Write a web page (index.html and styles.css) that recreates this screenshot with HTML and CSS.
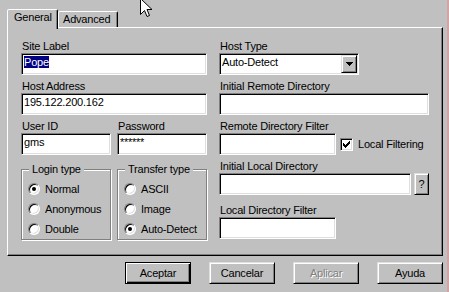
FILE: index.html
```html
<!DOCTYPE html>
<html>
<head>
<meta charset="utf-8">
<link rel="stylesheet" href="styles.css">
</head>
<body>
<div class="dlg">
  <svg class="cursor" width="13" height="20" viewBox="0 0 13 20">
    <path d="M0.5 0.5 L0.5 16.5 L4.5 12.5 L7 18.5 L9.5 17.5 L7 11.5 L12 11.5 Z" fill="#fff" stroke="#000" stroke-width="1" stroke-linejoin="miter"/>
  </svg>
  <div class="tabs">
    <div class="tab tab-sel">General</div>
    <div class="tab tab-adv">Advanced</div>
  </div>
  <div class="panel">
    <div class="col">
      <div class="row">
        <div class="label">Site Label</div>
        <div class="field"><span class="hl">Pope</span></div>
      </div>
      <div class="row">
        <div class="label">Host Address</div>
        <div class="field">195.122.200.162</div>
      </div>
      <div class="row pair">
        <div class="sub">
          <div class="label">User ID</div>
          <div class="field">gms</div>
        </div>
        <div class="sub">
          <div class="label">Password</div>
          <div class="field pw">******</div>
        </div>
      </div>
      <div class="pair groups">
        <div class="group">
          <div class="legend">Login type</div>
          <div class="opt"><span class="radio on"></span>Normal</div>
          <div class="opt"><span class="radio"></span>Anonymous</div>
          <div class="opt"><span class="radio"></span>Double</div>
        </div>
        <div class="group">
          <div class="legend">Transfer type</div>
          <div class="opt"><span class="radio"></span>ASCII</div>
          <div class="opt"><span class="radio"></span>Image</div>
          <div class="opt"><span class="radio on"></span>Auto-Detect</div>
        </div>
      </div>
    </div>
    <div class="col">
      <div class="row">
        <div class="label">Host Type</div>
        <div class="field select w-select">
          <span>Auto-Detect</span>
          <span class="drop raised">
            <svg width="7" height="4" viewBox="0 0 7 4" shape-rendering="crispEdges"><path d="M0 0h7v1H0z M1 1h5v1H1z M2 2h3v1H2z M3 3h1v1H3z" fill="#000"/></svg>
          </span>
        </div>
      </div>
      <div class="row">
        <div class="label">Initial Remote Directory</div>
        <div class="field w-full"></div>
      </div>
      <div class="row">
        <div class="label">Remote Directory Filter</div>
        <div class="inline">
          <div class="field w-short"></div>
          <span class="check">
            <svg width="7" height="7" viewBox="0 0 7 7" shape-rendering="crispEdges"><path d="M6 0h1v3H6z M5 1h1v3H5z M4 2h1v3H4z M0 2h1v3H0z M1 3h1v3H1z M3 3h1v3H3z M2 4h1v3H2z" fill="#000"/></svg>
          </span>
          <span class="check-label">Local Filtering</span>
        </div>
      </div>
      <div class="row">
        <div class="label">Initial Local Directory</div>
        <div class="inline">
          <div class="field w-local"></div>
          <span class="qbtn raised">?</span>
        </div>
      </div>
      <div class="row row-last">
        <div class="label">Local Directory Filter</div>
        <div class="field w-short"></div>
      </div>
    </div>
  </div>
  <div class="buttons">
    <div class="btn btn-default">Aceptar</div>
    <div class="btn raised">Cancelar</div>
    <div class="btn raised disabled">Aplicar</div>
    <div class="btn raised">Ayuda</div>
  </div>
</div>
</body>
</html>
```

FILE: styles.css
```css
* { box-sizing: border-box; }

body {
  margin: 0;
  background: #c0c0c0;
  font-family: "Liberation Sans", Arial, sans-serif;
  font-size: 11px;
  letter-spacing: -0.2px;
  color: #000;
}

.dlg {
  position: relative;
  width: 449px;
  height: 292px;
  border-right: 2px solid #d4a3a3;
  overflow: hidden;
}

.cursor {
  position: absolute;
  left: 140px;
  top: -2px;
  z-index: 5;
}

.tabs {
  display: flex;
  align-items: flex-end;
  height: 27px;
  padding-left: 7px;
}

.tab {
  height: 16px;
  border: 1px solid;
  border-bottom: none;
  border-color: #fff #000 transparent #fff;
  border-radius: 2px 2px 0 0;
  box-shadow: inset -1px 0 #808080;
  line-height: 14px;
  background: #c0c0c0;
}

.tab-sel {
  width: 51px;
  height: 20px;
  padding-left: 6px;
  margin-bottom: -2px;
  position: relative;
  z-index: 1;
}

.tab-adv {
  width: 60px;
  padding-left: 4px;
}

.panel {
  width: 436px;
  height: 229px;
  margin-left: 7px;
  border: 1px solid;
  border-color: #fff #000 #000 #fff;
  box-shadow: inset -1px -1px #808080;
  padding: 12px 0 0 13px;
  display: grid;
  grid-template-columns: 186px 210px;
  column-gap: 12px;
  align-items: start;
}

.col {
  display: flex;
  flex-direction: column;
}

.col > * + * { margin-top: 5px; }
.col > .groups { margin-top: 14px; }
.col > .row-last { margin-top: 9px; }

.label {
  height: 13px;
  line-height: 13px;
  padding-left: 1px;
  white-space: nowrap;
}

.field {
  height: 22px;
  background: #fff;
  border: 1px solid;
  border-color: #808080 #fff #fff #808080;
  box-shadow: inset 1px 1px #000, inset -1px -1px #dfdfdf;
  padding: 1px 1px 1px 2px;
  line-height: 15px;
  white-space: nowrap;
  overflow: hidden;
}

.hl {
  background: #000080;
  color: #fff;
}

.pw { letter-spacing: -0.3px; }

.pair {
  display: grid;
  grid-template-columns: 90px 90px;
  column-gap: 6px;
}

.group {
  height: 71px;
  border: 1px solid #808080;
  box-shadow: inset 1px 1px #fff, 1px 1px #fff;
  padding-left: 6px;
}

.legend {
  width: fit-content;
  height: 13px;
  line-height: 13px;
  margin: -7px 0 0 1px;
  padding: 0 3px;
  background: #c0c0c0;
}

.opt {
  height: 20px;
  display: flex;
  align-items: center;
  gap: 5px;
  white-space: nowrap;
}

.legend + .opt { margin-top: 3px; }

.radio {
  width: 12px;
  height: 12px;
  flex: none;
  border-radius: 50%;
  background: #fff;
  border: 1px solid;
  border-color: #808080 #fff #fff #808080;
  box-shadow: inset 1px 1px #000, inset -1px -1px #dfdfdf;
  display: grid;
  place-items: center;
}

.radio.on::after {
  content: "";
  width: 4px;
  height: 4px;
  border-radius: 50%;
  background: #000;
}

.select {
  display: flex;
  justify-content: space-between;
  align-items: flex-start;
  padding-right: 1px;
}

.w-select { width: 140px; }
.w-full { width: 210px; }
.w-short { width: 117px; }
.w-local { width: 192px; }

.raised {
  background: #c0c0c0;
  border: 1px solid;
  border-color: #dfdfdf #000 #000 #dfdfdf;
  box-shadow: inset 1px 1px #fff, inset -1px -1px #808080;
}

.drop {
  width: 16px;
  height: 18px;
  display: grid;
  place-items: center;
}

.inline {
  display: flex;
  align-items: center;
}

.check {
  width: 13px;
  height: 13px;
  margin-left: 4px;
  background: #fff;
  border: 1px solid;
  border-color: #808080 #fff #fff #808080;
  box-shadow: inset 1px 1px #000, inset -1px -1px #dfdfdf;
  display: grid;
  place-items: center;
}

.check-label {
  margin-left: 5px;
  white-space: nowrap;
}

.qbtn {
  width: 15px;
  height: 22px;
  margin-left: 3px;
  line-height: 20px;
  text-align: center;
}

.buttons {
  display: flex;
  gap: 18px;
  margin-top: 6px;
  padding-left: 125px;
}

.btn {
  width: 66px;
  height: 22px;
  line-height: 20px;
  text-align: center;
}

.btn-default {
  border: 1px solid #000;
  box-shadow: inset 1px 1px #fff, inset -1px -1px #000, inset -2px -2px #808080;
}

.disabled {
  color: #808080;
  text-shadow: 1px 1px #fff;
}
```
